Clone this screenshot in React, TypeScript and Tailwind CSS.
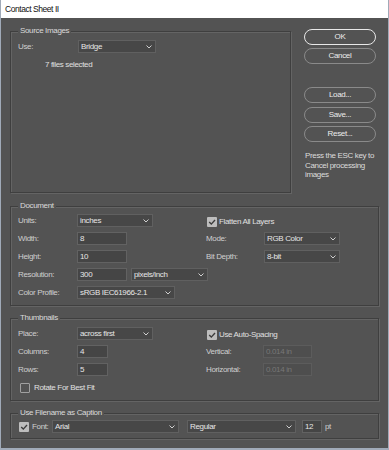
import React from 'react';

const Chevron = () => (
  <svg width="6" height="4" viewBox="0 0 6 4" className="shrink-0 mr-[3px]">
    <path d="M0.5 0.5 L3 3 L5.5 0.5" stroke="#d0d0d0" strokeWidth="1" fill="none" />
  </svg>
);

const Select = ({ value, w }: { value: string; w: string }) => (
  <div className={`${w} h-[13px] shrink-0 flex items-center justify-between border border-[#606060] bg-[#474747] pl-[2px] text-[#e6e6e6]`}>
    <span className="whitespace-nowrap">{value}</span>
    <Chevron />
  </div>
);

const Input = ({ value, w, disabled }: { value: string; w: string; disabled?: boolean }) => (
  <div
    className={`${w} h-[13px] shrink-0 flex items-center border pl-[2px] ${
      disabled ? 'border-[#5c5c5c] bg-[#4e4e4e] text-[#777777]' : 'border-[#626262] bg-[#454545] text-[#e6e6e6]'
    }`}
  >
    {value}
  </div>
);

const Check = ({ checked }: { checked?: boolean }) =>
  checked ? (
    <div className="w-[10px] h-[10px] shrink-0 bg-[#bdbdbd] rounded-[1px] flex items-center justify-center">
      <svg width="10" height="10" viewBox="0 0 10 10">
        <path d="M2.2 5 L4.3 7.1 L8 3" stroke="#3c3c3c" strokeWidth="1.4" fill="none" />
      </svg>
    </div>
  ) : (
    <div className="w-[10px] h-[10px] shrink-0 border border-[#a0a0a0] rounded-[1px]" />
  );

const Group = ({ title, className, children }: { title: string; className: string; children?: React.ReactNode }) => (
  <div className={`relative border border-[#3f3f3f] shadow-[inset_1px_1px_0_#646464,1px_1px_0_#646464] ${className}`}>
    <span className="absolute -top-[6px] left-[7px] px-[2px] bg-[#535353] text-[#dadada] whitespace-nowrap">{title}</span>
    {children}
  </div>
);

const Label = ({ text, w = 'w-[59px]' }: { text: string; w?: string }) => (
  <span className={`${w} shrink-0 text-[#cfcfcf] whitespace-nowrap`}>{text}</span>
);

const Button = ({ text, primary }: { text: string; primary?: boolean }) => (
  <div
    className={`h-[16px] rounded-full flex items-center justify-center text-[#ececec] border ${
      primary ? 'border-[#e8e8e8]' : 'border-[#8a8a8a]'
    }`}
  >
    {text}
  </div>
);

export default function App() {
  return (
    <div className="w-[389px] h-[450px] bg-[#535353] border-x border-b-[2px] border-[#a0aab8] flex flex-col overflow-hidden font-['Liberation_Sans',Arial,sans-serif] text-[8px] tracking-[-0.35px] leading-[10px]">
      <div className="h-[18px] shrink-0 bg-white flex items-center pl-[4px] text-[8.5px] tracking-[-0.45px] text-[#111111]">
        Contact Sheet II
      </div>

      <div className="pl-[9px] flex flex-col">
        {/* Source images + buttons */}
        <div className="flex items-start">
          <Group title="Source Images" className="mt-[13px] h-[162px] w-[281px]">
            <div className="pt-[8px] pl-[7px] flex items-center">
              <Label text="Use:" w="w-[60px]" />
              <Select value="Bridge" w="w-[78px]" />
            </div>
            <div className="mt-[7px] pl-[34px] text-[#e0e0e0]">7 files selected</div>
          </Group>

          <div className="ml-[13px] mt-[11px] w-[72px] flex flex-col">
            <Button text="OK" primary />
            <div className="mt-[3px]">
              <Button text="Cancel" />
            </div>
            <div className="mt-[23px]">
              <Button text="Load..." />
            </div>
            <div className="mt-[4px]">
              <Button text="Save..." />
            </div>
            <div className="mt-[3px]">
              <Button text="Reset..." />
            </div>
            <div className="mt-[9px] pl-[1px] leading-[9.5px] text-[#dcdcdc] whitespace-nowrap">
              Press the ESC key to
              <br />
              Cancel processing
              <br />
              images
            </div>
          </div>
        </div>

        {/* Document */}
        <Group title="Document" className="mt-[13px] h-[100px] w-[369px]">
          <div className="pt-[7px] pl-[7px] flex">
            <div className="w-[188px] shrink-0 flex flex-col gap-[5px]">
              <div className="h-[13px] flex items-center">
                <Label text="Units:" />
                <Select value="inches" w="w-[76px]" />
              </div>
              <div className="h-[13px] flex items-center">
                <Label text="Width:" />
                <Input value="8" w="w-[50px]" />
              </div>
              <div className="h-[13px] flex items-center">
                <Label text="Height:" />
                <Input value="10" w="w-[50px]" />
              </div>
              <div className="h-[13px] flex items-center">
                <Label text="Resolution:" />
                <Input value="300" w="w-[50px]" />
                <div className="ml-[4px]">
                  <Select value="pixels/inch" w="w-[77px]" />
                </div>
              </div>
              <div className="h-[13px] flex items-center">
                <Label text="Color Profile:" />
                <Select value="sRGB IEC61966-2.1" w="w-[98px]" />
              </div>
            </div>
            <div className="flex flex-col gap-[5px]">
              <div className="h-[13px] flex items-end gap-[2px] pl-[1px]">
                <Check checked />
                <span className="text-[#e0e0e0] whitespace-nowrap">Flatten All Layers</span>
              </div>
              <div className="h-[13px] flex items-center">
                <Label text="Mode:" w="w-[58px]" />
                <Select value="RGB Color" w="w-[76px]" />
              </div>
              <div className="h-[13px] flex items-center">
                <Label text="Bit Depth:" w="w-[58px]" />
                <Select value="8-bit" w="w-[76px]" />
              </div>
            </div>
          </div>
        </Group>

        {/* Thumbnails */}
        <Group title="Thumbnails" className="mt-[12px] h-[83px] w-[369px]">
          <div className="pt-[8px] pl-[7px] flex">
            <div className="w-[188px] shrink-0 flex flex-col gap-[5px]">
              <div className="h-[13px] flex items-center">
                <Label text="Place:" />
                <Select value="across first" w="w-[76px]" />
              </div>
              <div className="h-[13px] flex items-center">
                <Label text="Columns:" />
                <Input value="4" w="w-[31px]" />
              </div>
              <div className="h-[13px] flex items-center">
                <Label text="Rows:" />
                <Input value="5" w="w-[31px]" />
              </div>
              <div className="h-[13px] flex items-center gap-[4px] pl-[2px]">
                <Check />
                <span className="text-[#e0e0e0] whitespace-nowrap">Rotate For Best Fit</span>
              </div>
            </div>
            <div className="flex flex-col gap-[5px]">
              <div className="h-[13px] flex items-end gap-[2px] pl-[1px]">
                <Check checked />
                <span className="text-[#e0e0e0] whitespace-nowrap">Use Auto-Spacing</span>
              </div>
              <div className="h-[13px] flex items-center">
                <Label text="Vertical:" w="w-[57px]" />
                <Input value="0.014 in" w="w-[49px]" disabled />
              </div>
              <div className="h-[13px] flex items-center">
                <Label text="Horizontal:" w="w-[57px]" />
                <Input value="0.014 in" w="w-[49px]" disabled />
              </div>
            </div>
          </div>
        </Group>

        {/* Caption */}
        <Group title="Use Filename as Caption" className="mt-[12px] h-[26px] w-[369px]">
          <div className="pt-[6px] pl-[8px] flex items-center">
            <Check checked />
            <span className="ml-[3px] w-[20px] shrink-0 text-[#cfcfcf]">Font:</span>
            <Select value="Arial" w="w-[127px]" />
            <div className="ml-[8px]">
              <Select value="Regular" w="w-[109px]" />
            </div>
            <div className="ml-[6px]">
              <Input value="12" w="w-[20px]" />
            </div>
            <span className="ml-[3px] text-[#cfcfcf]">pt</span>
          </div>
        </Group>
      </div>
    </div>
  );
}
